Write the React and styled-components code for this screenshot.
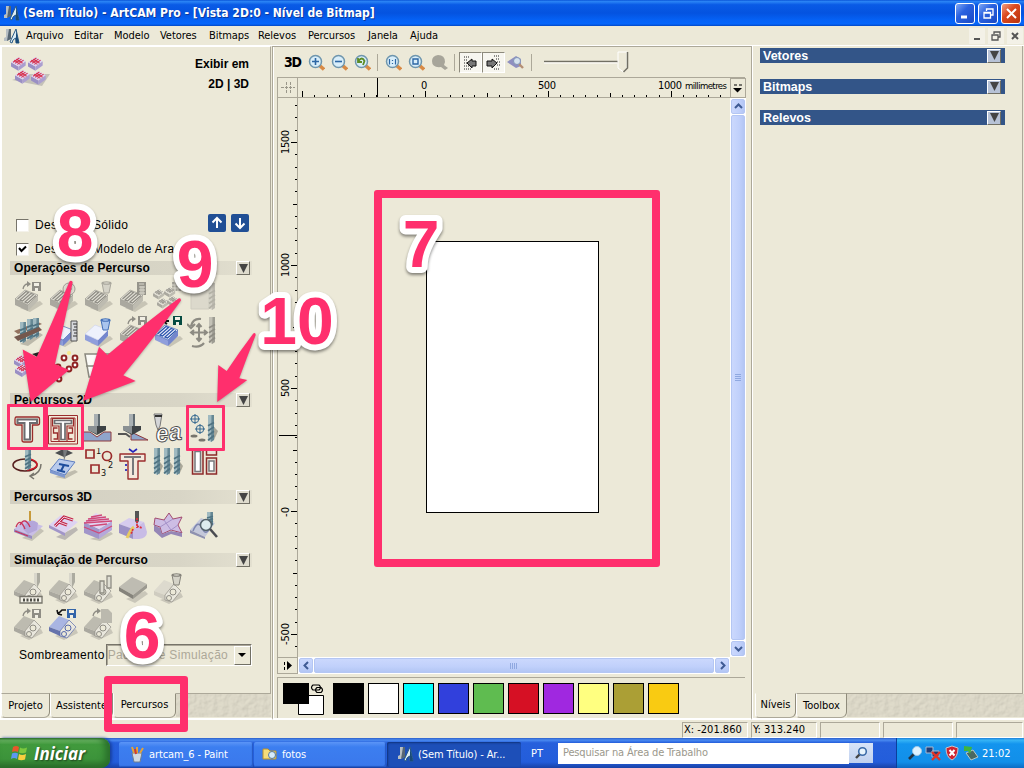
import React from 'react';
import styled, { createGlobalStyle, css } from 'styled-components';

const tahoma = '"DejaVu Sans Condensed", "DejaVu Sans", Tahoma, sans-serif';
const arial = '"Liberation Sans", Arial, sans-serif';
const face = '#ece9d8';
const shade = '#aca899';
const pink = '#ff2f6d';

const Global = createGlobalStyle`
  * { box-sizing: border-box; }
  body { margin: 0; background: ${face}; overflow: hidden; }
  svg { display: block; flex: none; }
`;

const Screen = styled.div`
  position: relative;
  width: 1024px;
  height: 768px;
  display: flex;
  flex-direction: column;
  overflow: hidden;
  background: ${face};
  color: #000;
  font: 11px ${tahoma};
  white-space: nowrap;
`;

const TitleBar = styled.header`
  height: 26px;
  flex: none;
  display: flex;
  align-items: center;
  padding: 0 3px 0 4px;
  background: linear-gradient(#0a55d8 0, #2a84f5 6%, #0a5be6 18%, #0453e0 50%, #0562f6 78%, #0566fb 92%, #0348c4 100%);
`;

const TitleText = styled.h1`
  margin: 0 auto 0 3px;
  color: #fff;
  font: bold 12px ${tahoma};
  letter-spacing: ${(p) => p.$ls}px;
  text-shadow: 1px 1px 0 #0c3a9c;
`;

const CaptionButton = styled.span`
  width: 20px;
  height: 21px;
  margin-left: 3px;
  border: 1px solid #fff;
  border-radius: 3px;
  display: flex;
  align-items: center;
  justify-content: center;
  background: ${(p) => (p.$close ? 'linear-gradient(135deg,#f0a084,#dc4a20 40%,#b8330e)' : 'linear-gradient(135deg,#7fa8f5,#2a62e0 40%,#1a49c4)')};
`;

const MenuBar = styled.nav`
  height: 20px;
  flex: none;
  display: flex;
  align-items: center;
  padding: 0 1px 0 4px;
  border-bottom: 1px solid #fff;
`;

const MenuItem = styled.span`
  width: ${(p) => p.$w}px;
  letter-spacing: -0.05px;
`;

const MdiButtons = styled.div`
  margin-left: auto;
  display: flex;
  gap: 3px;
`;

const MdiButton = styled.span`
  width: 16px;
  height: 16px;
  background: #f3f1e7;
  display: flex;
  align-items: center;
  justify-content: center;
`;

const Workspace = styled.main`
  height: 674px;
  flex: none;
  display: flex;
`;

const SideColumn = styled.section`
  width: ${(p) => p.$w}px;
  flex: none;
  display: flex;
  flex-direction: column;
  border-left: 1px solid #fff;
  border-bottom: 2px solid #fff;
`;

const LeftPanel = styled.div`
  height: 648px;
  border-top: 1px solid #fff;
  border-left: 1px solid #fff;
  border-right: 1px solid ${shade};
  border-bottom: 1px solid ${shade};
  margin-right: 1px;
  padding-left: 8px;
  overflow: hidden;
`;

const PanelTop = styled.div`
  display: flex;
  justify-content: space-between;
  width: 239px;
  height: 166px;
  padding: 9px 0 0 0;
`;

const ViewLinks = styled.div`
  margin-top: -2px;
  font: bold 12px/20px ${arial};
  text-align: right;
`;

const CheckRow = styled.div`
  display: flex;
  align-items: center;
  width: 239px;
  height: 24px;
  padding-left: 6px;
  gap: 6px;
  font: 12px ${arial};
  letter-spacing: 0.3px;
`;

const CheckBox = styled.span`
  width: 13px;
  height: 13px;
  background: #fff;
  border: 1px solid;
  border-color: #77746a #f4f2ea #f4f2ea #77746a;
`;

const ArrowButtons = styled.span`
  margin: -5px 0 0 auto;
  display: flex;
  gap: 5px;
`;

const SectionHead = styled.h2`
  width: 242px;
  height: 14px;
  margin: 0;
  display: flex;
  align-items: center;
  justify-content: space-between;
  padding: 0 2px 0 4px;
  background: linear-gradient(90deg, #d3d0c2, #d8d5c6 70%, #e3e0d0);
  font: bold 12px ${arial};
  letter-spacing: 0.06px;
`;

const DropSquare = styled.span`
  width: 14px;
  height: 14px;
  background: ${(p) => (p.$blue ? '#b7c2d6' : '#dedbcd')};
  border: 1px solid;
  border-color: #fff #716f64 #716f64 #fff;
  display: flex;
  align-items: center;
  justify-content: center;
`;

const IconGrid = styled.div`
  display: grid;
  grid-template-columns: repeat(6, 35px);
  grid-auto-rows: 35px;
  padding: 6px 0 0 2px;
  height: ${(p) => p.$h}px;
`;

const ShadingRow = styled.label`
  display: flex;
  align-items: center;
  height: 22px;
  padding-left: 9px;
  font: 12px ${arial};
  letter-spacing: 0.3px;
`;

const Combo = styled.span`
  width: 146px;
  height: 22px;
  margin-left: 1px;
  padding-left: 1px;
  display: flex;
  align-items: center;
  justify-content: space-between;
  border: 1px solid;
  border-color: #77746a #fff #fff #77746a;
  box-shadow: inset 1px 1px 0 #aca899;
  color: #aca899;
`;

const ComboArrow = styled.span`
  width: 17px;
  height: 19px;
  background: ${face};
  border: 1px solid;
  border-color: #fff #716f64 #716f64 #fff;
  display: flex;
  align-items: center;
  justify-content: center;
`;

const TabStrip = styled.div`
  flex: 1;
  display: flex;
  align-items: stretch;
  padding-left: ${(p) => p.$pl || 0}px;
`;

const Tab = styled.span`
  width: ${(p) => p.$w}px;
  background: ${face};
  border: 1px solid #8f8b7b;
  border-top-color: ${(p) => (p.$on ? face : shade)};
  border-left-color: #fff;
  border-bottom-color: ${shade};
  border-radius: 0 0 6px 4px;
  margin-top: -1px;
  display: flex;
  align-items: center;
  justify-content: center;
  padding-bottom: ${(p) => (p.$on ? 2 : 0)}px;
`;

const Center = styled.section`
  width: 480px;
  flex: none;
  border-left: 1px solid ${shade};
  border-top: 1px solid ${shade};
  border-right: 1px solid ${shade};
  border-bottom: 2px solid #fff;
  box-shadow: inset 1px 0 0 #fff;
  padding: 0 6px 0 4px;
  display: flex;
  flex-direction: column;
`;

const ToolBar = styled.div`
  height: 30px;
  flex: none;
  display: flex;
  align-items: center;
  padding-left: 7px;
`;

const Label3D = styled.b`
  width: 24px;
  font: bold 14px "DejaVu Sans Condensed", sans-serif;
  letter-spacing: -1.2px;
`;

const ToolSlot = styled.span`
  width: ${(p) => p.$w || 23}px;
  flex: none;
`;

const Divider = styled.i`
  width: 1px;
  height: 17px;
  background: ${shade};
  margin-right: ${(p) => p.$mr}px;
`;

const Pressed = styled.span`
  width: 23px;
  height: 21px;
  background: #f7f6f0;
  border: 1px solid;
  border-color: #8d8a7c #fff #fff #8d8a7c;
  display: flex;
  align-items: center;
  justify-content: center;
`;

const RulerGrid = styled.div`
  height: 596px;
  flex: none;
  display: grid;
  grid-template-columns: 21px 432px 16px;
  grid-template-rows: 20px 559px 17px;
  border-top: 1px solid ${shade};
`;

const Corner = styled.div`
  border-left: 1px solid ${shade};
  border-right: 1px solid ${shade};
  border-bottom: 1px solid ${shade};
`;

const TopRuler = styled.div`
  border-bottom: 1px solid ${shade};
`;

const SideRuler = styled.div`
  border-left: 1px solid ${shade};
  border-right: 1px solid ${shade};
`;

const SmallButton = styled.div`
  border: 1px solid;
  border-color: #fff #716f64 #716f64 #fff;
  outline: 1px solid ${shade};
  outline-offset: -1px;
  display: flex;
  align-items: center;
  justify-content: center;
`;

const Canvas = styled.div`
  padding: 143px 0 0 128px;
`;

const Page = styled.div`
  width: 173px;
  height: 272px;
  background: #fff;
  border: 1px solid #000;
`;

const Scroll = styled.div`
  display: flex;
  flex-direction: ${(p) => (p.$v ? 'column' : 'row')};
  gap: 1px;
  padding: 1px;
  background: #fff;
`;

const blueFace = css`
  background: linear-gradient(${(p) => (p.$v ? '90deg' : '180deg')}, #cbd8fd, #c0d0fb 60%, #b3c6f4);
  border: 1px solid #b4c6f3;
  border-radius: 2px;
  display: flex;
  align-items: center;
  justify-content: center;
`;

const ScrollButton = styled.span`
  ${blueFace}
  width: ${(p) => (p.$v ? 'auto' : '14px')};
  height: ${(p) => (p.$v ? '15px' : 'auto')};
`;

const ScrollThumb = styled.span`
  ${blueFace}
  flex: 1;
`;

const Palette = styled.div`
  flex: 1;
  margin-top: 4px;
  border-top: 1px solid ${shade};
  border-left: 1px solid ${shade};
  display: flex;
  align-items: flex-start;
  padding: 5px 0 0 5px;
`;

const PaletteRow = styled.div`
  display: flex;
  gap: 4px;
  margin-left: 6px;
`;

const Swatch = styled.span`
  width: 31px;
  height: 31px;
  border: 1px solid #000;
  background: ${(p) => p.$c};
`;

const RightPanel = styled.div`
  height: 648px;
  margin: 0 1px 0 3px;
  padding: 2px 0 0 4px;
  border-right: 1px solid ${shade};
  border-bottom: 1px solid ${shade};
`;

const BlueHead = styled.h2`
  width: 245px;
  height: 15px;
  margin: 0 0 16px;
  padding: 0 4px 0 3px;
  display: flex;
  align-items: center;
  justify-content: space-between;
  background: #335588;
  color: #fff;
  font: bold 12.5px ${arial};
`;

const StatusBar = styled.footer`
  height: 18px;
  flex: none;
  display: flex;
  gap: 3px;
  padding: 2px 1px 0 682px;
`;

const StatusCell = styled.span`
  width: ${(p) => p.$w}px;
  height: 16px;
  border: 1px solid;
  border-color: ${shade} #fff #fff ${shade};
  padding-left: 1px;
  line-height: 14px;
`;

const TaskBar = styled.footer`
  height: 30px;
  flex: none;
  display: flex;
  align-items: center;
  background: linear-gradient(#2c5fca 0, #4a8af0 7%, #2660dc 16%, #235ddb 80%, #1941a5 100%);
  color: #fff;
`;

const Start = styled.div`
  width: 110px;
  height: 30px;
  margin-right: 9px;
  border-radius: 0 9px 9px 0;
  display: flex;
  align-items: center;
  padding-left: 10px;
  gap: 6px;
  background: linear-gradient(#2d6a2b 0, #6cb865 7%, #419a3d 22%, #3c933a 70%, #2a6b2a 100%);
  box-shadow: inset -5px 0 6px #2a702b, 2px 0 3px #1840a0;
  font: italic bold 17px "Open Sans", ${arial};
  text-shadow: 1px 1px 2px #1b3c1b;
`;

const TaskButton = styled.div`
  width: ${(p) => p.$w}px;
  height: 25px;
  margin: 2px 1px 0 0;
  padding-left: ${(p) => p.$pl}px;
  display: flex;
  align-items: center;
  gap: 4px;
  border-radius: 2px;
  letter-spacing: -0.12px;
  background: ${(p) => (p.$on ? '#1d4fb8' : 'linear-gradient(#5b95f7, #3c7ef0 20%, #3a78ec)')};
  box-shadow: ${(p) => (p.$on ? 'inset 1px 1px 2px #10337c' : 'inset -1px -1px 1px #2458c4')};
`;

const Lang = styled.span`
  width: 36px;
  padding-left: 9px;
`;

const SearchBox = styled.div`
  width: 291px;
  height: 21px;
  background: #fff;
  color: #9b988c;
  padding-left: 5px;
  line-height: 20px;
  letter-spacing: -0.16px;
`;

const SearchButton = styled.div`
  width: 24px;
  height: 20px;
  background: linear-gradient(#d8e4f8, #bfd0ee);
  display: flex;
  align-items: center;
  justify-content: center;
`;

const Tray = styled.div`
  margin-left: auto;
  width: 128px;
  height: 30px;
  border-left: 1px solid #0b3f9c;
  display: flex;
  align-items: center;
  padding-left: 10px;
  gap: 2px;
  background: linear-gradient(#1c7fd8 0, #36b4f5 7%, #1394ee 20%, #128fe9 80%, #0d6cc4 100%);
`;

const Clock = styled.span`
  margin-left: 1px;
`;

const Overlay = styled.svg`
  position: absolute;
  left: 0;
  top: 0;
`;

const Arrows = styled.g`
  fill: ${pink};
  filter: drop-shadow(0 1px 1px rgba(0, 0, 0, 0.25));
`;

const Frame = styled.div`
  position: absolute;
  left: ${(p) => p.$x}px;
  top: ${(p) => p.$y}px;
  width: ${(p) => p.$w}px;
  height: ${(p) => p.$h}px;
  border: ${(p) => p.$b}px solid ${pink};
  border-radius: ${(p) => (p.$b > 4 ? 3 : 1)}px;
`;

const Mark = styled.text`
  font: bold 66px ${arial};
  text-anchor: middle;
  fill: ${pink};
  stroke: #fff;
  stroke-width: 12px;
  stroke-linejoin: round;
  paint-order: stroke;
  filter: drop-shadow(0 2px 1.5px rgba(0, 0, 0, 0.45));
`;

/* ---------- icon drawing helpers ---------- */

const Ico = ({ children, w = 32, h = 32, ...r }) => (
  <svg width={w} height={h} viewBox={`0 0 ${w} ${h}`} fill="none" {...r}>{children}</svg>
);

const gray = { top: '#e4e2d8', left: '#aaa89f', right: '#bdbbb0', line: '#8f8d85' };
const lilac = { top: '#ddd2f2', left: '#9a8fc4', right: '#ab9fd0', line: '#c42a50' };
const blue = { top: '#eef1fc', left: '#8f9edb', right: '#7486cd', line: '#2c55ad' };

const Slab = ({ c = gray, lines = true, y = 0 }) => (
  <g transform={`translate(0 ${y})`}>
    <path d="M8 27L28 20L31 23L18 31Z" fill="#c7c4b5" />
    <path d="M3 18L16 24V30L3 24Z" fill={c.left} />
    <path d="M16 24L26 14V20L16 30Z" fill={c.right} />
    <path d="M3 18L13 9L26 14L16 24Z" fill={c.top} stroke={c.line} strokeWidth=".6" />
    {lines && <path d="M5.500 18L14 10.500L16.500 11.500L8 19L10.500 20L19 12.500L21.500 13.500L13 21L15.500 22L24 14.500" stroke={c.line} strokeWidth="1.300" />}
  </g>
);

const Floppy = ({ x = 20, y = 1, c = '#8f8d85' }) => (
  <g transform={`translate(${x} ${y})`}>
    <path d="M0 0H9V9H0Z" fill={c} />
    <path d="M2 1H7V4H2ZM3 6H6V9H3Z" fill="#f1efe4" />
  </g>
);

const Hook = ({ c = '#8f8d85' }) => (
  <g><path d="M11 8Q12 3 16 3" stroke={c} strokeWidth="1.3" /><path d="M15 0L19 3L15 6Z" fill={c} /></g>
);

const Bin = ({ c = '#a9a79d', l = '#d5d3c8', x = 19, y = 0 }) => (
  <g transform={`translate(${x} ${y})`}>
    <path d="M1 2H10L8 12H3Z" fill={l} stroke={c} />
    <ellipse cx="5.5" cy="2" rx="5" ry="1.8" fill={c} /><ellipse cx="5.5" cy="2" rx="3" ry=".8" fill={l} />
  </g>
);

const Drill = ({ x = 20, y = 1, h = 27, c = '#4f7382', l = '#9fb9c0' }) => (
  <g transform={`translate(${x} ${y})`}>
    <path d={`M0 0H6V${h - 2}L3 ${h}L0 ${h - 2}Z`} fill={l} />
    <path d={`M3.5 0H6V${h - 2}L3 ${h}Z`} fill={c} opacity=".7" />
    <path d={`M0 ${h * 0.4}L6 ${h * 0.28}M0 ${h * 0.58}L6 ${h * 0.44}M0 ${h * 0.76}L6 ${h * 0.6}M0 ${h * 0.94}L6 ${h * 0.76}`} stroke={c} strokeWidth="1.7" />
  </g>
);

const Cutter = ({ x, y, c = '#8f8d84', l = '#d8d6cb' }) => (
  <g transform={`translate(${x} ${y})`}>
    <path d="M0 0H6V9L3 15L0 9Z" fill={l} /><path d="M3 0H6V9L3 15Z" fill={c} opacity=".6" />
  </g>
);

const Chip = ({ x, y, c = gray, s = 1 }) => (
  <g transform={`translate(${x} ${y}) scale(${s})`}>
    <path d="M0 5L7 9V13L0 9Z" fill={c.left} /><path d="M7 9L14 4V8L7 13Z" fill={c.right} />
    <path d="M0 5L7 0L14 4L7 9Z" fill={c.top} />
    <path d="M2 5L8 1M4 6L10 2M6 7L12 3M3 3L9 7M5 2L11 6" stroke={c.line} strokeWidth="1" />
  </g>
);

const TIcon = () => (
  <Ico>
    <path d="M3.500 4H25.500Q27.500 4 27.500 6V10Q27.500 12 25.500 12H20.500V27Q20.500 29 18.500 29H12Q10 29 10 27V12H5Q3 12 3 10V6Q3 4 4.500 4Z" fill={face} stroke="#9a2c2c" strokeWidth="1.300" />
    <path d="M5.500 6.500H25V10H18V26.500H12.500V10H5.500Z" fill="#fff" stroke="#6c6c70" strokeWidth="2" />
  </Ico>
);

const TPocketIcon = () => (
  <Ico>
    <path d="M1.500 2.500H30.500V31H1.500Z" fill="#f3ead9" stroke="#9a2c2c" />
    <path d="M4 5H28V28.500H20M4 5V28.500H12" stroke="#9a2c2c" />
    <path d="M10.500 15H6.500V20H10.500V26H6.500M21.500 15H25.500V20H21.500V26H25.500" stroke="#9a2c2c" strokeWidth="1.300" />
    <path d="M5.500 5.500H26.500V13H20V28.500H12V13H5.500Z" fill={face} stroke="#9a2c2c" strokeWidth="1.200" />
    <path d="M7.500 7.500H24.500V10.500H18V26.500H14V10.500H7.500Z" fill="#fff" stroke="#6c6c70" strokeWidth="1.700" />
  </Ico>
);

const Tool = ({ side }) => (
  <Ico>
    <path d="M12 1H18V14H12Z" fill="#a8afb2" /><path d="M16 1H18V14H16Z" fill="#5f6a70" />
    {side ? <path d="M14 19L31 27H14Z" fill="#8fa5cc" stroke="#8d3a3e" /> : <path d="M1 19H8L15 24L22 19H29V28H1Z" fill="#8fa5cc" stroke="#8d3a3e" />}
    <path d="M6 13H24V17L15 22L6 17Z" fill="#3d4245" /><path d="M6 13H15V21L6 17Z" fill="#8a9093" />
    {side && <path d="M1 21H9L13 24" stroke="#555" strokeWidth="2" />}
  </Ico>
);

const SimSlab = ({ c = gray, y = 0 }) => (
  <g transform={`translate(0 ${y})`}>
    <path d="M8 27L29 20L31 24L17 31Z" fill="#c9c6b9" />
    <path d="M2 18L12 7L22 11L13 22Z" fill={c.right} /><path d="M2 18L13 22V27L2 22Z" fill={c.left} />
    <path d="M13 22L22 11L29 18L20 29L13 27Z" fill="#e9e7dd" stroke={c.line} strokeWidth=".7" />
    <circle cx="21" cy="19" r="3" fill={face} stroke={c.line} /><circle cx="17" cy="25" r="2.500" fill={face} stroke={c.line} />
  </g>
);

const red = { ...lilac, line: '#d7304a' };

const ops = [
  <Ico><Slab /><Floppy /><Hook /></Ico>,
  <Ico><Slab /><circle cx="22" cy="8" r="6" fill="#dedcd1" stroke="#9f9d94" /><path d="M22 4V8H25" stroke="#8f8d85" /></Ico>,
  <Ico><Slab /><Bin /></Ico>,
  <Ico><Slab /><path d="M20 1H29V14H20Z" fill="#96948b" /><path d="M22 3H27M22 6H28M22 9H28M22 12H28M24 5V14M26 5V14" stroke="#d9d7cc" /></Ico>,
  <Ico><Chip x={1} y={8} s={0.8} /><Chip x={12} y={6} s={0.8} /><Chip x={5} y={17} s={0.8} /><Chip x={15} y={15} s={0.8} /><path d="M20 1H29V10H20Z" fill="#aaa89e" /><path d="M20 4H29M20 7H29M23 1V10M26 1V10" stroke="#e0ded3" /></Ico>,
  <Ico><path d="M4 9H22V28H4Z" fill="#dcd9cc" stroke="#cfccc0" /><Drill x={22} y={2} c="#b3b1a6" l="#d2d0c5" /></Ico>,
  <Ico><path d="M8 28L28 17L31 19L16 30Z" fill="#bbb8aa" /><path d="M2 15L26 6L30 8L6 18Z" fill="#93725f" /><Drill x={8} y={6} h={21} /><Drill x={15} y={3} h={21} /><Drill x={21} y={2} h={20} /><path d="M2 21L27 11L30 14L6 25Z" fill="#75584d" /></Ico>,
  <Ico><Slab c={blue} lines={false} /><path d="M24 5H30V25H24Z" fill="#d7d9dc" stroke="#555" /><path d="M26 8H30M27 11H30M26 14H30M27 17H30M26 20H30" stroke="#333" /></Ico>,
  <Ico><Slab c={{ ...blue, line: '#c9d0ee' }} lines={false} /><Bin c="#4571b8" l="#a9c5ee" x={18} y={2} /></Ico>,
  <Ico><Slab /><Floppy y={0} x={21} /><Hook /></Ico>,
  <Ico><Slab c={blue} /><Floppy x={21} y={0} c="#064b42" /><path d="M11 5H17M11 5L15 1.500M11 5L15 8" stroke="#111" strokeWidth="1.800" /></Ico>,
  <Ico><path d="M12 9V24M4.500 16.500H19.500M9.500 11L12 8L14.500 11M9.500 22L12 25L14.500 22M7 14L4 16.500L7 19M17 14L20 16.500L17 19" stroke="#8d8b82" strokeWidth="2" /><path d="M4 10Q6 2 14 3M5 30Q13 32 17 27M0 8L4 12L8 8" stroke="#8d8b82" strokeWidth="2.200" /><Drill x={22} y={1} c="#8f8d84" l="#c3c1b6" /></Ico>,
  <Ico><Chip x={2} y={4} c={red} /><Chip x={3} y={13} c={red} /><path d="M20 3L27 1V7Z" fill="#222" /></Ico>,
  <Ico>{[[17, 4], [28, 4], [28, 11], [22, 15], [11, 13], [12, 25]].map(([x, y]) => <circle key={`${x}-${y}`} cx={x} cy={y + 3} r="2.400" stroke="#8e2323" strokeWidth="2" fill="#fff" />)}<circle cx="22" cy="2" r="2" fill="#f7e98c" /></Ico>,
  <Ico><path d="M3 3H29L26 26H7Z" fill="#fbfbf7" stroke="#8b897f" strokeWidth="1.500" /><path d="M4 15H27M16 3V26" stroke="#8b897f" strokeWidth="1.500" /></Ico>,
];

const p2d = [
  <TIcon />,
  <TPocketIcon />,
  <Tool />,
  <Tool side />,
  <Ico w={34}><path d="M2 1H10L8 13L6 17L4 12Z" fill="#d4d5d7" stroke="#777" /><path d="M3 3H10" stroke="#333" strokeWidth="2" /><text x="4" y="28" fontFamily="Liberation Sans" fontStyle="italic" fontWeight="bold" fontSize="25" fill="#fff" stroke="#4c4c4c" strokeWidth="1" textLength="26" lengthAdjust="spacingAndGlyphs" transform="rotate(-6 16 24)">ea</text></Ico>,
  <Ico><g stroke="#34688f" strokeWidth="1"><circle cx="8" cy="6" r="3.800" /><path d="M3 6H13M8 1V11" /><circle cx="13" cy="16" r="3.800" /><path d="M8 16H18M13 11V21" /></g><ellipse cx="7" cy="23" rx="3.500" ry="1.600" fill="#76756d" /><ellipse cx="15" cy="27" rx="3.500" ry="1.600" fill="#76756d" /><path d="M27 14L31 18L27 27Z" fill="#aaa899" /><Drill x={21} y={2} h={27} /></Ico>,
  <Ico><ellipse cx="13" cy="17" rx="12" ry="6" stroke="#57201f" strokeWidth="1.500" /><path d="M15 22Q25 21 25 16Q24 12 17 11" stroke="#d11c2a" strokeWidth="1.500" /><Drill x={13} y={0} h={22} /><path d="M19 28Q29 25 29 16M22 25L18 28L22 31" stroke="#77756c" strokeWidth="1.500" /></Ico>,
  <Ico><path d="M8 29L28 22L31 24L18 31Z" fill="#bfbcae" /><path d="M3 22L12 11L28 14L18 27Z" fill="#b9cbec" stroke="#5f7fc0" /><path d="M3 22L18 27V30L3 25Z" fill="#7e98cf" /><path d="M12 16L22 18M10 22L18 24M17 17L14 23" stroke="#1d4d9d" strokeWidth="2" /><path d="M8 5L17 9L26 5L20 2H14Z" fill="#4b4e50" /><path d="M16 0H21L17 13Z" fill="#777b7d" /></Ico>,
  <Ico w={35}><g stroke="#9a2c2c" strokeWidth="1.700"><path d="M4 2H12V10H4ZM9 17H17V25H9Z" /><circle cx="25" cy="8" r="4.500" /></g><g fill="#111" fontFamily="DejaVu Sans Condensed" fontSize="9"><text x="14" y="6">1</text><text x="26" y="20">2</text><text x="19" y="28">3</text></g></Ico>,
  <Ico><path d="M3 6H28V13H21V31H11V13H3Z" stroke="#9a2c2c" strokeWidth="1.400" fill="#f4e8dc" strokeLinejoin="round" /><path d="M7 9H24M16 9V27" stroke="#77787c" strokeWidth="2" /><path d="M12 1L16 4L20 1M9 16V18M9 21V23" stroke="#2525bb" strokeWidth="1.700" /></Ico>,
  <Ico>{[2, 12, 22].map((x) => <g key={x}><path d={`M${x + 6} 14L${x + 9} 18L${x + 5} 27Z`} fill="#aaa899" /><Drill x={x} y={0} h={27} /></g>)}</Ico>,
  <Ico><path d="M5.500 1H16V26H5.500ZM19.500 1H29.500V7H19.500ZM19.500 10H29.500V26H19.500Z" fill="#e8e1d6" stroke="#8c2a2a" strokeWidth="1.500" /><path d="M8 3.500H13.500V23.500H8ZM22 13H27V23H22Z" fill="#fff" stroke="#77787c" strokeWidth="1.500" /></Ico>,
];

const p3d = [
  <Ico w={33}><path d="M10 28L28 18L32 21L20 31Z" fill="#c5c2b5" /><path d="M2 19L12 10L31 16L20 26Z" fill="#c9bee6" /><path d="M2 19L20 26V29L2 22Z" fill="#968bc2" /><path d="M11 19Q16 6 26 13L25 20L16 24Z" fill="#b4a6da" /><path d="M4 17Q8 7 13 19M8 15Q13 6 18 17M3 21L16 26" stroke="#c9335a" strokeWidth="1.300" /><path d="M18 1V11" stroke="#c79a3b" strokeWidth="2" /></Ico>,
  <Ico><path d="M9 27L29 17L31 20L18 30Z" fill="#bbb7b3" /><path d="M2 15L14 5L31 12L18 23Z" fill="#ddd3f2" /><path d="M2 15L18 23V26L2 18Z" fill="#a195c9" /><path d="M8 16L17 7L26 10M12 12L20 15" stroke="#c42848" strokeWidth="3" /><path d="M8 16L17 7L26 10M12 12L20 15" stroke="#f0dfee" strokeWidth=".9" /></Ico>,
  <Ico><path d="M8 29L29 22L31 24L18 31Z" fill="#c5c2b5" /><path d="M2 12L17 19V29L2 23Z" fill="#a195c9" /><path d="M17 19L30 11V20L17 29Z" fill="#b6a8da" /><path d="M2 12L14 3L30 11L17 19Z" fill="#e2d5f3" /><path d="M2 13L30 11M4 11L27 9M6 9L24 7M9 7L20 5M8 16L25 14M2 17L17 23L30 16" stroke="#d04a78" strokeWidth="1.300" /></Ico>,
  <Ico><path d="M2 14L12 8L27 12L16 19Z" fill="#d6cbee" /><path d="M2 14L16 19V29L2 23Z" fill="#9b90c6" /><path d="M16 19L27 12L30 22Q30 28 22 29L16 29Z" fill="#c8bce6" /><path d="M10 28Q14 19 17 17" stroke="#e6ca63" strokeWidth="3" /><path d="M18 1H22V11L20 14L18 11Z" fill="#555" /><path d="M20 8V18M16 19L14 24M20 16L25 18" stroke="#dd2e3c" strokeWidth="1.700" strokeDasharray="2 1" /></Ico>,
  <Ico><path d="M3 8L12 10L17 3L21 9L30 7L26 15L30 23L19 20L10 24L8 17L2 15Z" fill="#cdbde4" stroke="#a34c6f" /><path d="M2 15L8 18L10 24L19 21L30 23V27L19 24L10 28L2 21Z" fill="#9586b6" /><path d="M12 10L19 20M8 17L21 9M19 20L26 15" stroke="#a491c8" /></Ico>,
  <Ico><path d="M3 20L14 8L28 13L18 27Z" fill="#c4c8da" /><path d="M3 20L18 27V29L3 23Z" fill="#8e91b0" /><path d="M6 21Q11 9 15 18T23 17" stroke="#7e86b0" strokeWidth="1.500" /><Drill x={20} y={2} h={15} /><circle cx="19" cy="15" r="5.500" fill="#ddecee" stroke="#54636b" strokeWidth="1.500" /><path d="M23 19L30 27" stroke="#494b50" strokeWidth="2.600" /></Ico>,
];

const sim = [
  <Ico><SimSlab /><Cutter x={22} y={0} /><path d="M8 23.500H30V30H8Z" fill="#f3f1e7" stroke="#77756b" strokeWidth="1.300" /><path d="M11 27H28" stroke="#4d4c46" strokeWidth="3" strokeDasharray="2 1.500" /></Ico>,
  <Ico><SimSlab /><Cutter x={22} y={0} /></Ico>,
  <Ico><SimSlab /><path d="M18 8H22V20H18ZM25 3H29V15H25Z" fill="#deddd2" stroke="#8f8d84" strokeWidth="1.300" /></Ico>,
  <Ico><path d="M9 26L28 18L31 21L18 30Z" fill="#c9c6b9" /><path d="M2 14L15 4L30 11L16 22Z" fill="#bebcb2" /><path d="M2 14L16 22V26L2 18Z" fill="#85837b" /><path d="M16 22L30 11V15L16 26Z" fill="#9b9990" /></Ico>,
  <Ico><SimSlab c={{ ...gray, left: '#cfccc0', right: '#dddace' }} /><Bin c="#85837b" /></Ico>,
  <Ico />,
  <Ico><SimSlab y={1} /><Floppy /><Hook /></Ico>,
  <Ico><SimSlab y={1} c={{ left: '#6673ac', right: '#a9b5e2', line: '#5669ac' }} /><Floppy c="#3465a9" /><path d="M11 6L15 2H19M11 6L10 2M11 6L15 7" stroke="#111" strokeWidth="1.600" /></Ico>,
  <Ico><SimSlab y={1} /><path d="M19 1H26L30 5V15H19Z" fill="#bbb9ae" /><Hook /></Ico>,
];

const Lens = ({ children, size = 17 }) => (
  <Ico w={size} h={size}>
    <path d="M11.500 11.500L16 15.500" stroke="#d88a45" strokeWidth="3.400" />
    <circle cx="7.500" cy="7.500" r="6" fill="#d9eefa" stroke="#6f96ad" strokeWidth="1.500" />{children}
  </Ico>
);

const Tri = ({ s = 9, c = '#444' }) => <Ico w={s} h={s}><path d={`M0 0H${s}L${s / 2} ${s}Z`} fill={c} /></Ico>;

const Logo = ({ s = 16 }) => (
  <svg width={s} height={s} viewBox="0 0 16 16" fill="none">
    <path d="M2 1H6V11L3 13H0V10L2 9Z" fill="#b7bfc4" /><path d="M5 1H7V11L3 13Z" fill="#566673" />
    <path d="M6 14L12 1L15 15H12L11.500 10L9 12L8 15Z" fill="#dcecf4" stroke="#2a5c86" /><path d="M12 2L15 15H12Z" fill="#194b77" />
  </svg>
);

const Chevron = ({ r = 0 }) => <Ico w={9} h={9}><path d="M1 6L4.500 2.500L8 6" stroke="#3f5b94" strokeWidth="2" transform={`rotate(${r} 4.500 4.500)`} /></Ico>;

const Texture = ({ w }) => (
  <svg width={w} height="23">
    <filter id={`grain${w}`} x="0" y="0" width="100%" height="100%">
      <feTurbulence type="fractalNoise" baseFrequency=".2" numOctaves="3" seed="4" />
      <feDiffuseLighting lightingColor="#e2decd" surfaceScale=".7"><feDistantLight azimuth="225" elevation="68" /></feDiffuseLighting>
    </filter>
    <rect width={w} height="23" filter={`url(#grain${w})`} />
  </svg>
);

const Section = ({ title, icons, h }) => (
  <>
    <SectionHead>{title}<DropSquare><Tri /></DropSquare></SectionHead>
    <IconGrid $h={h}>{icons.map((icon, i) => <React.Fragment key={i}>{icon}</React.Fragment>)}</IconGrid>
  </>
);

const step = 12.3;
const ticks = (from, to) => Array.from({ length: to - from + 1 }, (_, i) => from + i);
const tickLen = (n) => (n % 10 === 0 ? 6 : n % 5 === 0 ? 4 : 2);

const HRuler = () => (
  <svg width="432" height="19" shapeRendering="crispEdges">
    {ticks(-10, 24).map((n) => <rect key={n} x={Math.round(127 + n * step)} y={19 - tickLen(n)} width="1" height={tickLen(n)} />)}
    <rect x="79" y="0" width="1" height="19" />
    <g fontSize="11" fontFamily="DejaVu Sans Condensed">
      <text x="123" y="11">0</text><text x="240" y="11" textLength="18">500</text>
      <text x="360" y="11" textLength="24">1000</text><text x="387" y="11" fontSize="9.500" textLength="42">millimetres</text>
    </g>
  </svg>
);

const VRuler = () => (
  <svg width="19" height="559">
    <g shapeRendering="crispEdges">
      {ticks(-11, 33).map((n) => <rect key={n} x={19 - tickLen(n)} y={Math.round(413 - n * step)} width={tickLen(n)} height="1" />)}
      <rect x="1" y="337" width="18" height="1" />
    </g>
    <g fontSize="11" fontFamily="DejaVu Sans Condensed">
      {[[1500, 56, 24], [1000, 179, 24], [500, 299, 18], ['-0', 419, 10], [-500, 547, 22]].map(([t, y, l]) => (
        <text key={t} transform={`translate(11 ${y}) rotate(-90)`} textLength={l}>{t}</text>
      ))}
    </g>
  </svg>
);

const menus = [['Arquivo', 48], ['Editar', 40], ['Modelo', 46], ['Vetores', 49], ['Bitmaps', 49], ['Relevos', 50], ['Percursos', 60], ['Janela', 42], ['Ajuda', 40]];
const colours = ['#000', '#fff', '#0ff', '#3140dc', '#5fbc50', '#d61024', '#a028e0', '#ffff80', '#ab9f35', '#f9cb12'];

export default function App() {
  return (
    <Screen>
      <Global />
      <TitleBar>
        <Logo />
        <TitleText $ls={0.02}>(Sem Título) - ArtCAM Pro - [Vista 2D:0 - Nível de Bitmap]</TitleText>
        <CaptionButton><Ico w={13} h={13}><path d="M2 10H8" stroke="#fff" strokeWidth="3" /></Ico></CaptionButton>
        <CaptionButton><Ico w={13} h={13}><path d="M4.500 4V2H11V8H9M2 5.500H8.500V11H2ZM2 6H8" stroke="#fff" strokeWidth="1.300" /></Ico></CaptionButton>
        <CaptionButton $close><Ico w={13} h={13}><path d="M2 2L11 11M11 2L2 11" stroke="#fff" strokeWidth="2" /></Ico></CaptionButton>
      </TitleBar>
      <MenuBar>
        <Logo /><MenuItem $w={6} />
        {menus.map(([t, w]) => <MenuItem key={t} $w={w}>{t}</MenuItem>)}
        <MdiButtons>
          <MdiButton><Ico w={10} h={10}><path d="M2 8H8" stroke="#555" strokeWidth="2" /></Ico></MdiButton>
          <MdiButton><Ico w={10} h={10}><path d="M3 3V1H9V6H7M1 4H7V9H1Z" stroke="#555" strokeWidth="1.300" /></Ico></MdiButton>
          <MdiButton><Ico w={10} h={10}><path d="M2 2L8 8M8 2L2 8" stroke="#555" strokeWidth="2" /></Ico></MdiButton>
        </MdiButtons>
      </MenuBar>

      <Workspace>
        <SideColumn $w={272}>
          <LeftPanel>
            <PanelTop>
              <Ico w={42} h={32}>
                <path d="M2 24L20 18L40 18L32 30Z" fill="#c4c1b8" />
                <Chip x={1} y={1} c={red} s={1.05} /><Chip x={18} y={1} c={red} s={1.05} />
                <Chip x={5} y={14} c={red} s={1.05} /><Chip x={21} y={15} c={red} s={1.05} />
              </Ico>
              <ViewLinks>Exibir em<br />2D | 3D</ViewLinks>
            </PanelTop>
            <CheckRow>
              <CheckBox />Desenhar Sólido
              <ArrowButtons>
                {[0, 180].map((r) => (
                  <Ico key={r} w={18} h={18}><rect width="18" height="18" rx="2" fill="#214f95" /><path d="M9 14V4M4.500 8.500L9 4L13.500 8.500" stroke="#fff" strokeWidth="2" transform={`rotate(${r} 9 9)`} /></Ico>
                ))}
              </ArrowButtons>
            </CheckRow>
            <CheckRow><CheckBox><Ico w={11} h={11}><path d="M2 4L4.500 7L9 2.500" stroke="#000" strokeWidth="2" /></Ico></CheckBox>Desenhar Modelo de Arame</CheckRow>
            <Section title="Operações de Percurso" icons={ops} h={118} />
            <Section title="Percursos 2D" icons={p2d} h={83} />
            <Section title="Percursos 3D" icons={p3d} h={49} />
            <Section title="Simulação de Percurso" icons={sim} h={77} />
            <ShadingRow>Sombreamento<Combo>Padrão de Simulação<ComboArrow><Ico w={8} h={4}><path d="M0 0H8L4 4Z" fill="#000" /></Ico></ComboArrow></Combo></ShadingRow>
          </LeftPanel>
          <TabStrip>
            <Tab $w={49}>Projeto</Tab><Tab $w={63}>Assistente</Tab><Tab $w={63} $on>Percursos</Tab><Texture w={95} />
          </TabStrip>
        </SideColumn>

        <Center>
          <ToolBar>
            <Label3D>3D</Label3D>
            <ToolSlot><Lens><path d="M7.500 4V11M4 7.500H11" stroke="#2d67a5" strokeWidth="1.600" /></Lens></ToolSlot>
            <ToolSlot><Lens><path d="M4 7.500H11" stroke="#2d67a5" strokeWidth="1.600" /></Lens></ToolSlot>
            <ToolSlot><Lens><path d="M4 4V8H8M4.500 7Q8 2 10.500 7L9 11" stroke="#5d8c26" strokeWidth="1.800" /></Lens></ToolSlot>
            <Divider $mr={7} />
            <ToolSlot><Lens><path d="M4.500 5V10.500M10.500 5V10.500M7.500 6V7M7.500 9V10" stroke="#2d67a5" strokeWidth="1.200" /></Lens></ToolSlot>
            <ToolSlot><Lens><path d="M5 5H10V10H5Z" stroke="#2d67a5" strokeWidth="1.400" /></Lens></ToolSlot>
            <ToolSlot><Ico w={17} h={17}><path d="M7 1Q14 1 14 8L13 11L17 14L14 16L10 13Q1 14 1 7Q1 2 7 1Z" fill="#a7a59a" /></Ico></ToolSlot>
            <Divider $mr={4} />
            <Pressed><Ico w={17} h={17}><path d="M2 3H8M2 6H6M2 9H5M2 12H7M2 15H9" stroke="#222" strokeDasharray="1 1" /><path d="M5 9L10 5V7H14V12H10V14Z" fill="#777" stroke="#111" /></Ico></Pressed>
            <Pressed><Ico w={17} h={17}><path d="M9 2H15M11 5H15M12 8H15M12 11H15M9 15H15" stroke="#222" strokeDasharray="1 1" /><path d="M12 9L7 5V7H2V12H7V14Z" fill="#777" stroke="#111" /></Ico></Pressed>
            <ToolSlot $w={26}><Ico w={20} h={16}><path d="M2 8L11 2L16 5V12L11 14Z" fill="#8f8fc0" /><path d="M14 10L18 14" stroke="#b58f74" strokeWidth="2.400" /><circle cx="12" cy="7" r="3.500" fill="#d5e2ee" stroke="#8193b5" /></Ico></ToolSlot>
            <Divider $mr={12} />
            <Ico w={86} h={22}><path d="M0 10.500H77" stroke="#716f64" strokeWidth="1.500" /><path d="M0 12H73" stroke="#fff" /><path d="M74 1H83V17L79.500 21L74 17Z" fill={face} stroke="#fff" /><path d="M83.500 1V17L79.500 21" stroke="#716f64" strokeWidth="1.500" /></Ico>
          </ToolBar>
          <RulerGrid>
            <Corner><Ico w={19} h={19}><path d="M3 9.500H17M8.500 4V15M12.500 4V15" stroke="#9a978a" strokeDasharray="3 1" /></Ico></Corner>
            <TopRuler><HRuler /></TopRuler>
            <SmallButton><Ico w={10} h={9}><path d="M1 1H4M6 1H9" stroke="#000" /><path d="M0 4H9L4.500 8.500Z" fill="#000" /></Ico></SmallButton>
            <SideRuler><VRuler /></SideRuler>
            <Canvas><Page /></Canvas>
            <Scroll $v>
              <ScrollButton $v><Chevron /></ScrollButton>
              <ScrollThumb $v><Ico w={8} h={8}><path d="M1 .5H7M1 2.500H7M1 4.500H7M1 6.500H7" stroke="#8fa8e0" /></Ico></ScrollThumb>
              <ScrollButton $v><Chevron r={180} /></ScrollButton>
            </Scroll>
            <SmallButton><Ico w={10} h={10}><path d="M1.500 1V4M1.500 6V9" stroke="#000" /><path d="M4 0V9L9 4.500Z" fill="#000" /></Ico></SmallButton>
            <Scroll>
              <ScrollButton><Chevron r={-90} /></ScrollButton>
              <ScrollThumb><Ico w={8} h={8}><path d="M.5 1V7M2.500 1V7M4.500 1V7M6.500 1V7" stroke="#8fa8e0" /></Ico></ScrollThumb>
              <ScrollButton><Chevron r={90} /></ScrollButton>
            </Scroll>
          </RulerGrid>
          <Palette>
            <Ico w={44} h={34}>
              <path d="M15.500 12.500H40.500V31.500H15.500Z" fill="#fff" stroke="#000" /><path d="M0 0H26V21H0Z" fill="#000" />
              <path d="M30 2H36Q39 4.500 36 7H30Q27 4.500 30 2ZM34 4.500H38Q41 7 38 9.500H34Q31 7 34 4.500Z" stroke="#000" strokeWidth="1.200" />
            </Ico>
            <PaletteRow>{colours.map((c) => <Swatch key={c} $c={c} />)}</PaletteRow>
          </Palette>
        </Center>

        <SideColumn $w={272}>
          <RightPanel>
            {['Vetores', 'Bitmaps', 'Relevos'].map((t) => <BlueHead key={t}>{t}<DropSquare $blue><Tri /></DropSquare></BlueHead>)}
          </RightPanel>
          <TabStrip $pl={2}><Tab $w={41} $on>Níveis</Tab><Tab $w={51}>Toolbox</Tab><Texture w={177} /></TabStrip>
        </SideColumn>
      </Workspace>

      <StatusBar>
        <StatusCell $w={66}>X: -201.860</StatusCell><StatusCell $w={66}>Y: 313.240</StatusCell>
        <StatusCell $w={60} /><StatusCell $w={70} /><StatusCell $w={67} />
      </StatusBar>

      <TaskBar>
        <Start>
          <Ico w={18} h={18}><path d="M3 3Q6 1 9 3L8 8Q5 6.500 2 8Z" fill="#e8572b" /><path d="M10 3.500Q13 5.500 17 3.500L16 8.500Q12 10 9 8.500Z" fill="#7cc83e" /><path d="M2 9.500Q5 8 8 9.500L7 15Q4 13 1 15Z" fill="#5c98f0" /><path d="M9 10Q12 12 16 10L15 15.500Q11 17 8 15.500Z" fill="#f8cf3f" /></Ico>
          Iniciar
        </Start>
        <TaskButton $w={134} $pl={10}>
          <Ico w={16} h={17}><path d="M3 7L5 16H11L13 7Z" fill="#cfd9e2" stroke="#6e7f92" /><path d="M5 7L3 1M8 7V1M11 7L14 2" stroke="#e3a338" strokeWidth="2" /><path d="M7 8L6 3" stroke="#d33a2d" strokeWidth="2" /></Ico>artcam_6 - Paint
        </TaskButton>
        <TaskButton $w={132} $pl={8}>
          <Ico w={16} h={16}><path d="M1 3H6L8 5H14V13H1Z" fill="#f4dc7c" stroke="#b8912c" /><circle cx="10" cy="9" r="3.500" fill="#d7ecfb" stroke="#58799a" /></Ico>fotos
        </TaskButton>
        <TaskButton $w={134} $pl={11} $on><Logo />(Sem Título) - Ar...</TaskButton>
        <Lang>PT</Lang>
        <SearchBox>Pesquisar na Área de Trabalho</SearchBox>
        <SearchButton><Ico w={14} h={14}><path d="M6 8L2 12" stroke="#444" strokeWidth="2.400" /><circle cx="8.500" cy="5.500" r="3.800" stroke="#3c6ba8" strokeWidth="1.600" fill="#e8f4fd" /></Ico></SearchButton>
        <Tray>
          <Ico w={16} h={16}><path d="M7 9L2 14" stroke="#234" strokeWidth="2.600" /><circle cx="10" cy="6" r="4.500" fill="#dff2ff" stroke="#9ec8e8" /></Ico>
          <Ico w={17} h={16}><path d="M1 2H8V8H1ZM7 6H14V12H7Z" fill="#223e77" stroke="#a9b9cf" /><path d="M7 7L15 15M15 7L7 15" stroke="#e33326" strokeWidth="2.400" /></Ico>
          <Ico w={16} h={16}><path d="M8 1L14 3Q14 12 8 15Q2 12 2 3Z" fill="#cf2430" stroke="#c6c6cc" /><path d="M5.500 5L10.500 10.500M10.500 5L5.500 10.500" stroke="#fff" strokeWidth="2" /></Ico>
          <Ico w={17} h={16}><path d="M4 8L11 5L16 12L9 15Z" fill="#4a6860" stroke="#b9c9c4" /><path d="M2 1L10 2L8 9L6 6L2 6Z" fill="#3fb53d" /></Ico>
          <Clock>21:02</Clock>
        </Tray>
      </TaskBar>

      <Frame $x={7} $y={404} $w={39} $h={46} $b={3} />
      <Frame $x={45} $y={404} $w={39} $h={46} $b={3} />
      <Frame $x={186} $y={405} $w={39} $h={46} $b={3} />
      <Frame $x={104} $y={676} $w={84} $h={56} $b={8} />
      <Frame $x={374} $y={190} $w={286} $h={377} $b={8} />
      <Overlay width="1024" height="768" viewBox="0 0 1024 768">
        <Arrows>
          <path d="M69.500 281.500Q71 280 72.700 282Q64 325 55 364L69 370L30.700 402L22.700 349.500L36.700 357Q54 318 69.500 281.500Z" />
          <path d="M178.500 298.500Q181 297.500 181 300.500Q154 338 123.300 375.300L135.700 381L83 401L99 346.700L107.300 355Q144 324 178.500 298.500Z" />
          <path d="M253.300 333.500Q255.500 332 255.700 335Q247 357 239.300 378.300L247.300 380L217.200 402L218.300 365L226.700 371Q240 351 253.300 333.500Z" />
        </Arrows>
        <Mark x="75" y="256">8</Mark>
        <Mark x="195" y="287">9</Mark>
        <Mark x="297" y="344">10</Mark>
        <Mark x="142" y="658">6</Mark>
        <Mark x="421" y="267">7</Mark>
      </Overlay>
    </Screen>
  );
}
